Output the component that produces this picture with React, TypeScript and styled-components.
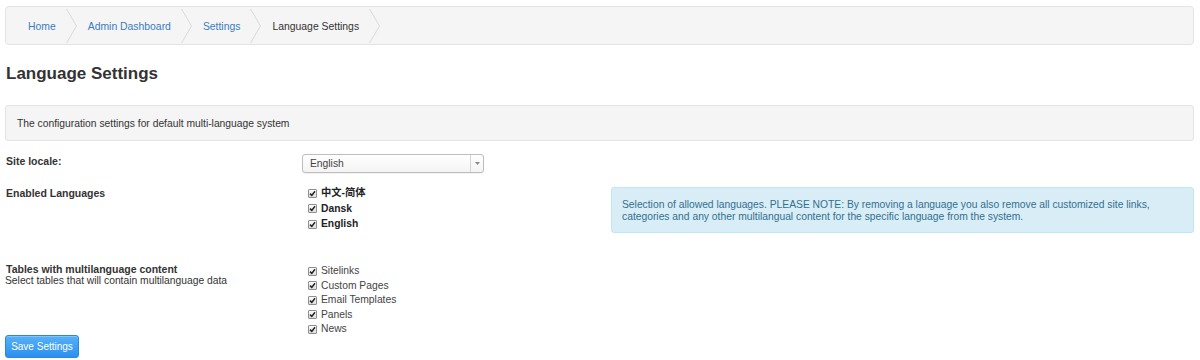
import React from "react";
import styled, { createGlobalStyle } from "styled-components";

const Global = createGlobalStyle`
  html, body { margin: 0; padding: 0; background: #fff; }
  body {
    font-family: "Liberation Sans", Arial, "Noto Sans CJK SC", sans-serif;
    font-size: 10.3px;
    color: #333;
  }
  * { box-sizing: border-box; }
`;

const Page = styled.div`
  padding: 6px 6px 0 5px;
  width: 1200px;
`;

const Breadcrumb = styled.nav`
  display: flex;
  align-items: stretch;
  height: 39px;
  background: #f5f5f5;
  border: 1px solid #e3e3e3;
  border-radius: 4px;
  padding: 1px 0 0 22px;
  overflow: hidden;
`;

const Crumb = styled.span<{ $active?: boolean }>`
  display: flex;
  align-items: center;
  font-size: 10.4px;
  color: ${(p) => (p.$active ? "#333" : "#3a7cc3")};
`;

const Chevron = styled.svg`
  width: 11px;
  height: 36px;
  margin: 0 11px 0 10px;
  flex: none;
`;

const Title = styled.h1`
  margin: 19px 0 0 1px;
  font-size: 17px;
  font-weight: bold;
  color: #333;
  line-height: 20px;
`;

const Well = styled.div`
  margin-top: 21px;
  background: #f5f5f5;
  border: 1px solid #e3e3e3;
  border-radius: 3px;
  padding: 11px 11px;
  height: 36px;
  font-size: 10.3px;
  line-height: 13px;
`;

const FormRow = styled.div<{ $mt: number }>`
  display: grid;
  grid-template-columns: 297px 309px 1fr;
  margin-top: ${(p) => p.$mt}px;
`;

const Label = styled.div<{ $pt?: number }>`
  padding-left: 1px;
  padding-top: ${(p) => p.$pt ?? 0}px;
  font-weight: bold;
  font-size: 10.5px;
  line-height: 12px;
`;

const SubLabel = styled.div`
  font-weight: normal;
  font-size: 10.3px;
  line-height: 12px;
  margin-left: -1px;
`;

const Select = styled.div`
  display: flex;
  width: 182px;
  height: 19px;
  border: 1px solid #bdbdbd;
  border-radius: 3px;
  background: linear-gradient(#ffffff, #f4f4f4);
  box-shadow: 0 1px 1px rgba(0, 0, 0, 0.06);
`;

const SelectText = styled.span`
  flex: 1;
  padding-left: 7px;
  line-height: 17px;
  font-size: 10.3px;
  color: #444;
`;

const SelectArrow = styled.span`
  width: 13px;
  border-left: 1px solid #d4d4d4;
  display: flex;
  align-items: center;
  justify-content: center;
`;

const Checks = styled.div<{ $gap: number; $pt?: number }>`
  display: flex;
  flex-direction: column;
  gap: ${(p) => p.$gap}px;
  padding-left: 6px;
  padding-top: ${(p) => p.$pt ?? 0}px;
`;

const CheckRow = styled.label<{ $bold?: boolean }>`
  display: flex;
  align-items: center;
  gap: 4px;
  font-weight: ${(p) => (p.$bold ? "bold" : "normal")};
  font-size: 10.3px;
  line-height: 12px;
  color: ${(p) => (p.$bold ? "#222" : "#444")};
`;

const Box = styled.span`
  width: 9px;
  height: 9px;
  border: 1px solid #8f8f8f;
  border-radius: 1px;
  background: linear-gradient(#fbfbfb, #dedede);
  display: inline-flex;
  align-items: center;
  justify-content: center;
  flex: none;
`;

const Alert = styled.div`
  height: 46px;
  background: #d9edf7;
  border: 1px solid #bce8f1;
  border-radius: 3px;
  color: #31708f;
  padding: 11px 10px;
  font-size: 10.3px;
  line-height: 11.5px;
`;

const Button = styled.button`
  margin-top: 0;
  display: block;
  width: 74px;
  height: 23px;
  border: 1px solid #2b87da;
  border-radius: 3px;
  background: linear-gradient(#57b1f7, #2b90ee);
  color: #fff;
  font-family: "Liberation Sans", Arial, sans-serif;
  font-size: 10px;
  padding: 0;
  box-shadow: inset 0 1px 0 rgba(255, 255, 255, 0.25);
`;

const Check = () => (
  <Box>
    <svg width="7" height="7" viewBox="0 0 7 7">
      <path d="M1 3.6 L2.8 5.4 L6 1.2" stroke="#222" strokeWidth="1.5" fill="none" />
    </svg>
  </Box>
);

const ChevronIcon = () => (
  <Chevron viewBox="0 0 11 36">
    <path d="M0.5 1 L10.5 18 L0.5 35" stroke="#d9d9d9" strokeWidth="1" fill="none" />
  </Chevron>
);

export default function App() {
  const crumbs = ["Home", "Admin Dashboard", "Settings", "Language Settings"];
  return (
    <Page>
      <Global />
      <Breadcrumb>
        {crumbs.map((c, i) => (
          <React.Fragment key={c}>
            <Crumb $active={i === crumbs.length - 1}>{c}</Crumb>
            <ChevronIcon />
          </React.Fragment>
        ))}
      </Breadcrumb>
      <Title>Language Settings</Title>
      <Well>The configuration settings for default multi-language system</Well>

      <FormRow $mt={13}>
        <Label $pt={1}>Site locale:</Label>
        <Select>
          <SelectText>English</SelectText>
          <SelectArrow>
            <svg width="5" height="3" viewBox="0 0 5 3">
              <path d="M0 0 L5 0 L2.5 3 Z" fill="#888" />
            </svg>
          </SelectArrow>
        </Select>
      </FormRow>

      <FormRow $mt={14}>
        <Label>Enabled Languages</Label>
        <Checks $gap={3.5}>
          <CheckRow $bold><Check />中文-简体</CheckRow>
          <CheckRow $bold><Check />Dansk</CheckRow>
          <CheckRow $bold><Check />English</CheckRow>
        </Checks>
        <Alert>
          Selection of allowed languages. PLEASE NOTE: By removing a language you also remove all customized site links,
          categories and any other multilangual content for the specific language from the system.
        </Alert>
      </FormRow>

      <FormRow $mt={30}>
        <Label>
          Tables with multilanguage content
          <SubLabel>Select tables that will contain multilanguage data</SubLabel>
        </Label>
        <Checks $gap={2.5} $pt={2}>
          {["Sitelinks", "Custom Pages", "Email Templates", "Panels", "News"].map((t) => (
            <CheckRow key={t}><Check />{t}</CheckRow>
          ))}
        </Checks>
      </FormRow>

      <Button>Save Settings</Button>
    </Page>
  );
}
